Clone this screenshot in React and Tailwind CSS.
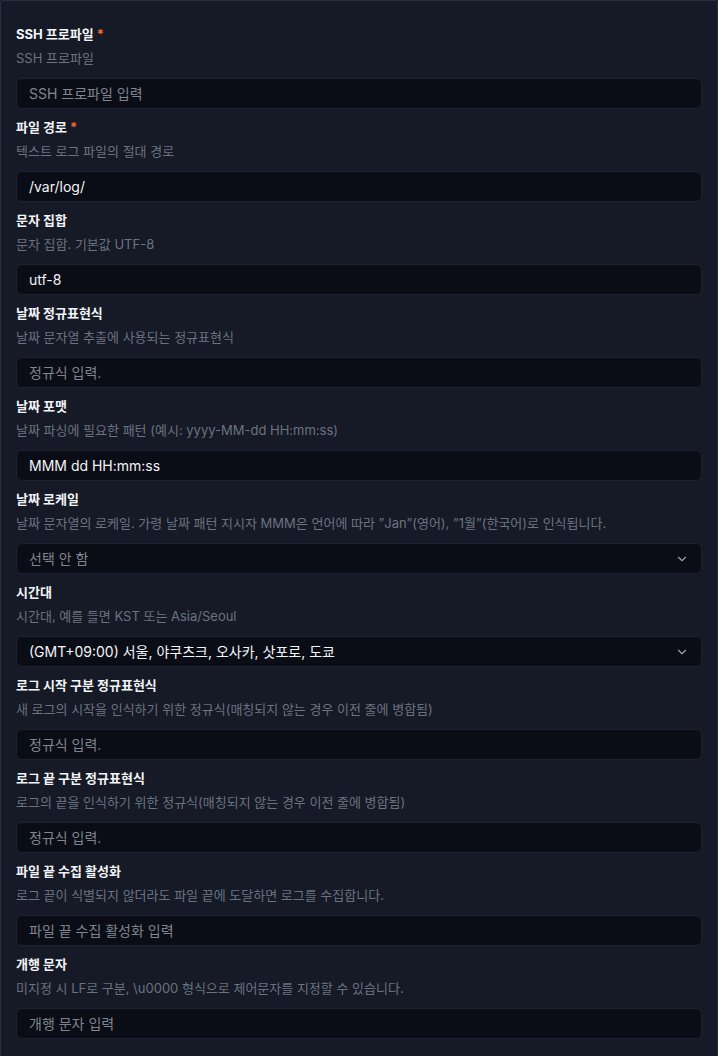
import { ChevronDown } from "lucide-react";

const fields = [
  { label: "SSH 프로파일", required: true, desc: "SSH 프로파일", placeholder: "SSH 프로파일 입력" },
  { label: "파일 경로", required: true, desc: "텍스트 로그 파일의 절대 경로", value: "/var/log/" },
  { label: "문자 집합", desc: "문자 집합. 기본값 UTF-8", value: "utf-8" },
  { label: "날짜 정규표현식", desc: "날짜 문자열 추출에 사용되는 정규표현식", placeholder: "정규식 입력." },
  { label: "날짜 포맷", desc: "날짜 파싱에 필요한 패턴 (예시: yyyy-MM-dd HH:mm:ss)", value: "MMM dd HH:mm:ss" },
  {
    label: "날짜 로케일",
    desc: "날짜 문자열의 로케일. 가령 날짜 패턴 지시자 MMM은 언어에 따라 ”Jan”(영어), ”1월”(한국어)로 인식됩니다.",
    select: true,
    placeholder: "선택 안 함",
  },
  {
    label: "시간대",
    desc: "시간대, 예를 들면 KST 또는 Asia/Seoul",
    select: true,
    value: "(GMT+09:00) 서울, 야쿠츠크, 오사카, 삿포로, 도쿄",
  },
  {
    label: "로그 시작 구분 정규표현식",
    desc: "새 로그의 시작을 인식하기 위한 정규식(매칭되지 않는 경우 이전 줄에 병합됨)",
    placeholder: "정규식 입력.",
  },
  {
    label: "로그 끝 구분 정규표현식",
    desc: "로그의 끝을 인식하기 위한 정규식(매칭되지 않는 경우 이전 줄에 병합됨)",
    placeholder: "정규식 입력.",
  },
  {
    label: "파일 끝 수집 활성화",
    desc: "로그 끝이 식별되지 않더라도 파일 끝에 도달하면 로그를 수집합니다.",
    placeholder: "파일 끝 수집 활성화 입력",
  },
  {
    label: "개행 문자",
    desc: "미지정 시 LF로 구분, \\u0000 형식으로 제어문자를 지정할 수 있습니다.",
    placeholder: "개행 문자 입력",
  },
];

function Field({ field }) {
  const text = field.value || field.placeholder;
  return (
    <div className="flex flex-col">
      <div className="flex items-center gap-[3px] h-5 text-[13px] font-bold text-[#f3f4f6]">
        <span>{field.label}</span>
        {field.required && <span className="text-[#f26b2a]">*</span>}
      </div>
      <div className="mt-[3px] h-5 leading-5 text-[13px] text-[#6b7280] whitespace-nowrap">{field.desc}</div>
      <div className="mt-[10px] h-[31px] flex items-center justify-between rounded-md border border-[#1c2232] bg-[#0a0d16] pl-[12px] pr-[12px]">
        <span className={`text-[14px] ${field.value ? "text-[#f3f4f6]" : "text-[#80848f]"}`}>{text}</span>
        {field.select && <ChevronDown size={14} strokeWidth={2} className="text-[#9ca3af]" />}
      </div>
    </div>
  );
}

export default function App() {
  return (
    <div
      className="min-h-screen bg-[#151a26]"
      style={{ fontFamily: 'Inter, "Noto Sans CJK KR", sans-serif' }}
    >
      <div className="min-h-[1056px] border border-b-0 border-[#2a2f3f] rounded-t-[3px] px-[15px] pt-[24px] flex flex-col gap-[9px]">
        {fields.map((f) => (
          <Field key={f.label} field={f} />
        ))}
      </div>
    </div>
  );
}
